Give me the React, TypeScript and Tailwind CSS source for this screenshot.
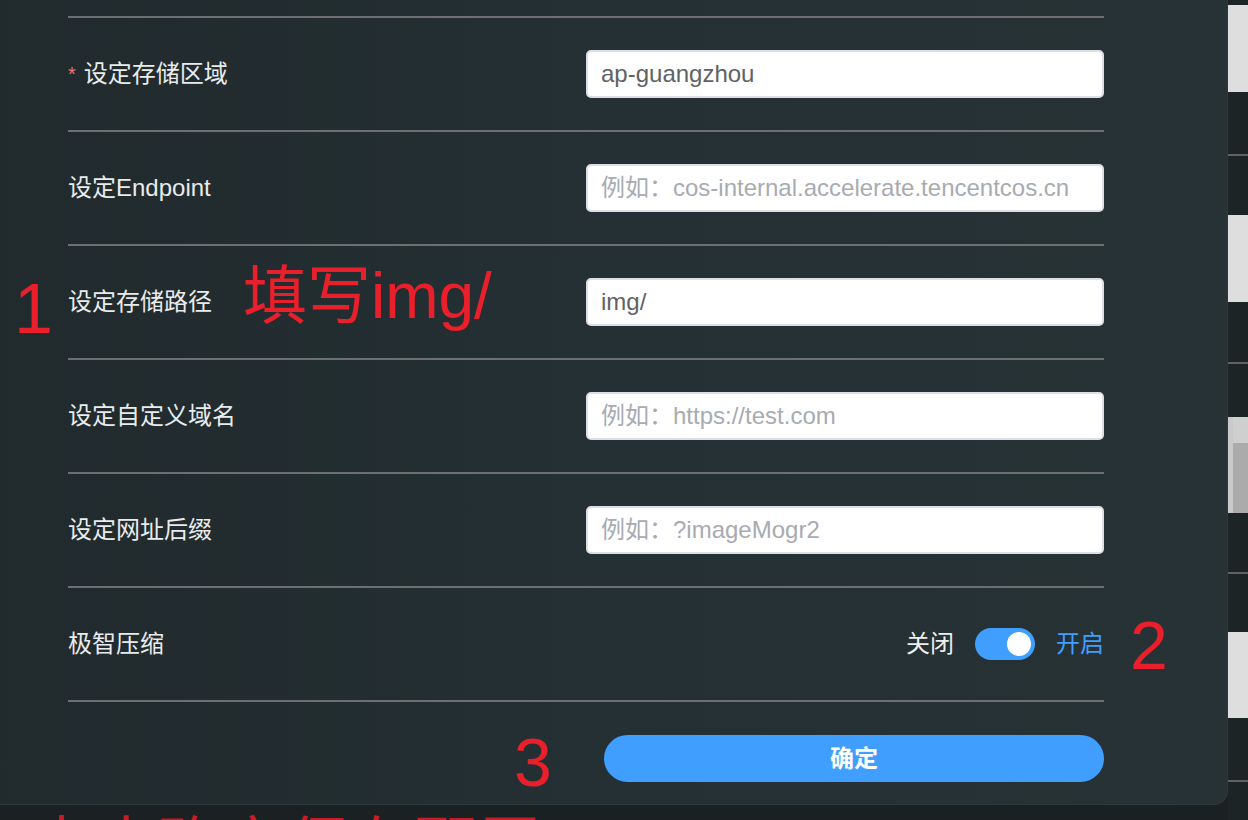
const font = "font-['Liberation_Sans','Noto_Sans_CJK_SC',sans-serif]";

type Field = {
  label: string;
  required?: boolean;
  value?: string;
  placeholder?: string;
};

const fields: Field[] = [
  { label: "设定存储区域", required: true, value: "ap-guangzhou" },
  { label: "设定Endpoint", placeholder: "例如：cos-internal.accelerate.tencentcos.cn" },
  { label: "设定存储路径", value: "img/" },
  { label: "设定自定义域名", placeholder: "例如：https://test.com" },
  { label: "设定网址后缀", placeholder: "例如：?imageMogr2" },
];

const FieldRow = ({ field }: { field: Field }) => (
  <div className="flex h-[114px] items-center justify-between border-t-2 border-[#6c7072]">
    <div className="flex items-center text-[24px] leading-none text-[#e9ebec]">
      {field.required && <span className="mr-[8px] text-[20px] text-[#f56c6c]">*</span>}
      <span>{field.label}</span>
    </div>
    <input
      readOnly
      value={field.value ?? ""}
      placeholder={field.placeholder}
      className={`${font} h-[48px] w-[518px] rounded-[5px] border-2 border-[#dcdfe6] bg-white px-[13px] text-[24px] text-[#606266] outline-none placeholder:text-[#a8abb2]`}
    />
  </div>
);

const Switch = ({ on }: { on: boolean }) => (
  <div className={`flex h-[32px] w-[60px] items-center rounded-full px-[4px] ${on ? "justify-end bg-[#409eff]" : "justify-start bg-[#dcdfe6]"}`}>
    <div className="h-[24px] w-[24px] rounded-full bg-white" />
  </div>
);

const Backdrop = () => (
  <div className="flex flex-1 flex-col bg-[#1c2426]">
    <div className="mt-[5px] h-[87px] bg-[#dedede]" />
    <div className="mt-[62px] h-[2px] bg-[#5d6263]" />
    <div className="mt-[59px] h-[87px] bg-[#dedede]" />
    <div className="mt-[60px] h-[2px] bg-[#5d6263]" />
    <div className="mt-[53px] flex h-[96px]">
      <div className="w-[5px] bg-[#c9c9c9]" />
      <div className="flex flex-1 flex-col">
        <div className="h-[26px] bg-[#cfcfcf]" />
        <div className="flex-1 bg-[#ababab]" />
      </div>
    </div>
    <div className="mt-[59px] h-[2px] bg-[#5d6263]" />
    <div className="mt-[58px] h-[86px] bg-[#dedede]" />
    <div className="mt-[62px] h-[2px] bg-[#5d6263]" />
  </div>
);

export default function App() {
  return (
    <div className={`${font} flex h-[820px] w-[1248px] overflow-hidden bg-[#1b2022]`}>
      <div className="flex w-[1228px] shrink-0 flex-col">
        <div className="relative z-10 h-[805px] shrink-0 rounded-br-[14px] border-r border-b border-[#30393c] bg-linear-to-r from-[#212a2d] via-[#243034] to-[#273235] pl-[68px] pr-[123px] pt-[16px]">
          {fields.map((f) => (
            <FieldRow key={f.label} field={f} />
          ))}

          <div className="flex h-[114px] items-center justify-between border-t-2 border-[#6c7072]">
            <span className="text-[24px] leading-none text-[#e9ebec]">极智压缩</span>
            <div className="flex items-center gap-[21px] text-[24px] leading-none">
              <span className="text-[#eceeef]">关闭</span>
              <Switch on />
              <span className="text-[#409eff]">开启</span>
            </div>
          </div>

          <div className="flex justify-end border-t-2 border-[#6c7072] pt-[33px]">
            <button className="h-[47px] w-[500px] rounded-full bg-[#409eff] text-[24px] font-bold text-white">
              确定
            </button>
          </div>

          {/* red annotations drawn over the form */}
          <span className="absolute left-[14px] top-[274px] text-[70px] leading-none text-[#e9202b]">1</span>
          <span className="absolute left-[243px] top-[264px] whitespace-nowrap text-[64px] leading-none text-[#e9202b]">
            填写img/
          </span>
          <span className="absolute left-[1130px] top-[611px] text-[68px] leading-none text-[#e9202b]">2</span>
          <span className="absolute left-[514px] top-[728px] text-[68px] leading-none text-[#e9202b]">3</span>
        </div>
        <div className="mt-[10px] whitespace-nowrap pl-[30px] text-[64px] leading-none text-[#c81d25]">
          点击确定保存配置
        </div>
      </div>
      <Backdrop />
    </div>
  );
}
